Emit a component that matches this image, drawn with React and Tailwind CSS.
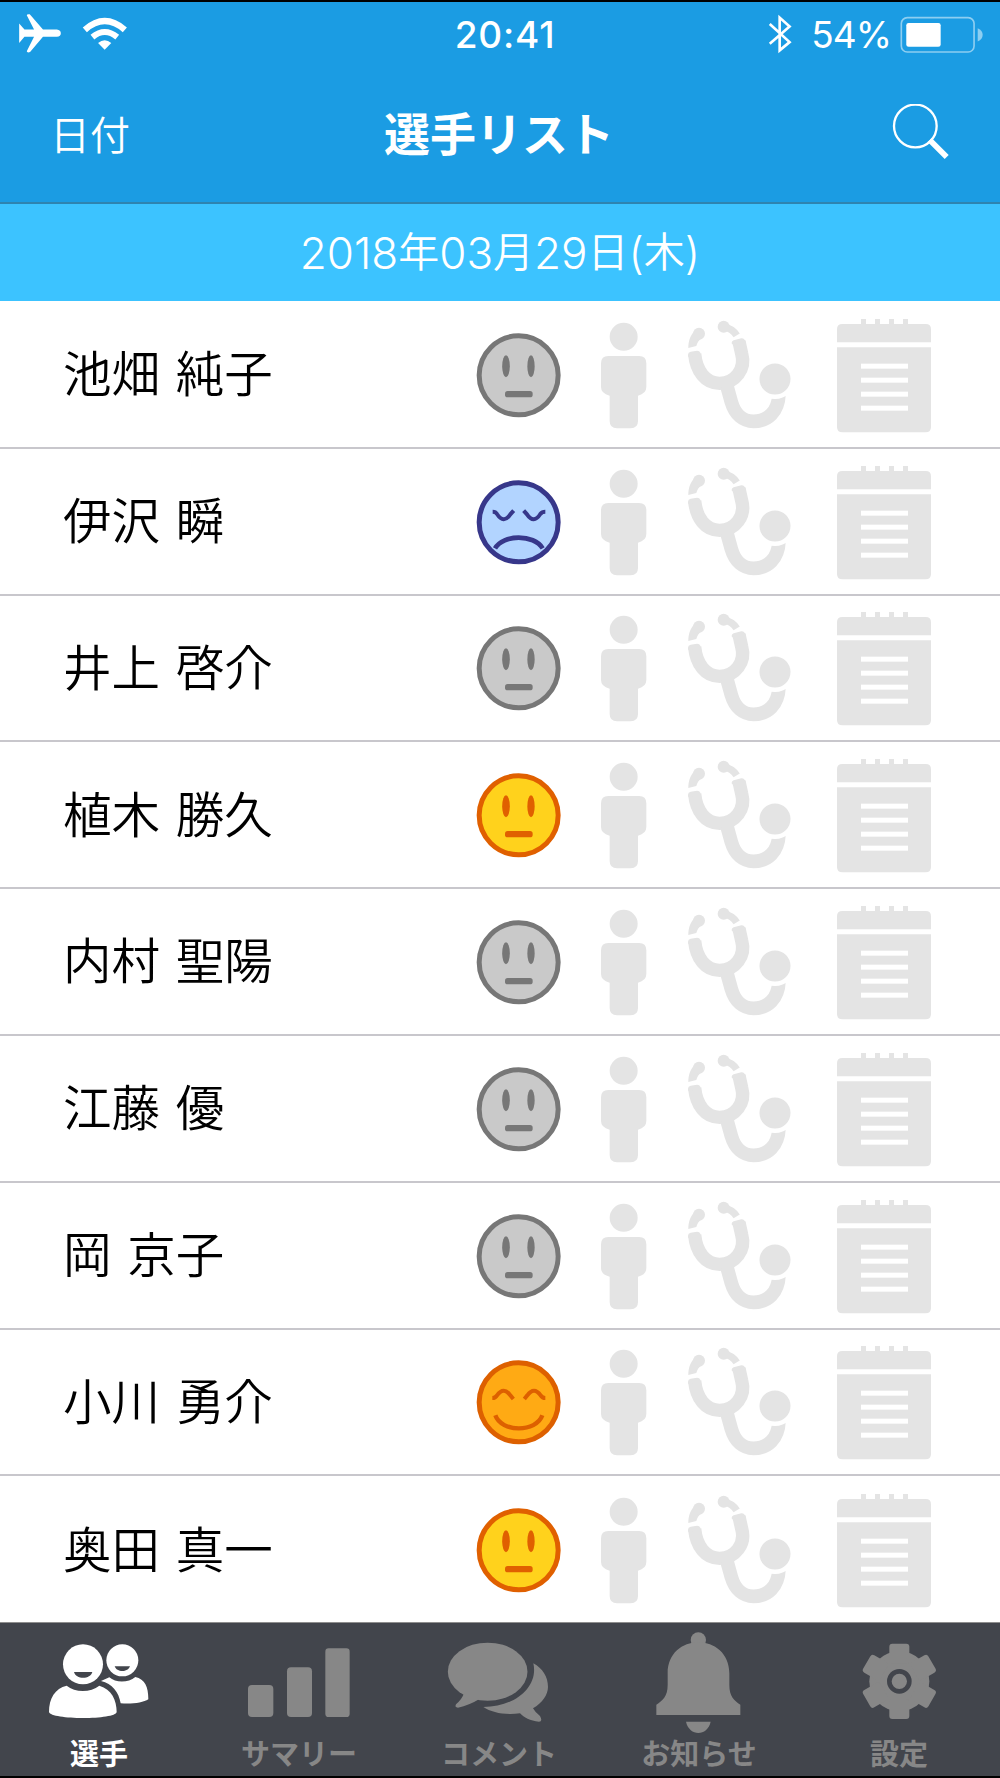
import React from 'react';

const players = [
    { name: '池畑 純子', mood: 'none' },
    { name: '伊沢 瞬', mood: 'sad' },
    { name: '井上 啓介', mood: 'none' },
    { name: '植木 勝久', mood: 'normal' },
    { name: '内村 聖陽', mood: 'none' },
    { name: '江藤 優', mood: 'none' },
    { name: '岡 京子', mood: 'none' },
    { name: '小川 勇介', mood: 'happy' },
    { name: '奥田 真一', mood: 'normal' },
];

const moodColors = {
    none: { line: '#777777', fill: '#c9c9c9' },
    normal: { line: '#e06000', fill: '#ffd21c' },
    happy: { line: '#dd6000', fill: '#ffaa14' },
    sad: { line: '#37378a', fill: '#b2d4ff' },
};

function MoodIcon({ mood }) {
    const { line, fill } = moodColors[mood];
    return (
        <svg viewBox="48 47 258 354" className="w-[86px] h-[118px]" fill="none">
            <circle cx="176" cy="225" r="118.5" fill={fill} stroke={line} strokeWidth="15" />
            {(mood === 'none' || mood === 'normal') && (
                <g fill={line}>
                    <ellipse cx="138" cy="198" rx="11.5" ry="33" />
                    <ellipse cx="213" cy="198" rx="11" ry="33" />
                    <rect x="135" y="272" width="83" height="19" rx="8" />
                </g>
            )}
            {mood === 'sad' && (
                <g stroke={line} strokeWidth="12">
                    <path d="M98 193 Q107 193 111 200 Q131 231 151 201 L161 190" />
                    <path d="M191 190 L201 201 Q221 231 241 200 Q246 193 256 193" />
                    <path d="M105 303 C130 260 222 260 248 303" strokeWidth="14" />
                </g>
            )}
            {mood === 'happy' && (
                <g stroke={line} strokeWidth="12">
                    <path d="M97 212 Q106 212 111 204 Q131 176 151 204 L160 215" />
                    <path d="M193 215 L202 204 Q222 176 242 204 Q247 212 256 212" />
                    <path d="M106 264 C124 316 229 316 247 264" strokeWidth="13" />
                </g>
            )}
        </svg>
    );
}

function PersonIcon() {
    return (
        <svg viewBox="423 47 138 354" className="w-[46px] h-[118px] ml-[39px]" fill="#e4e4e4">
            <circle cx="491" cy="109.500" r="42" />
            <path d="M445 167 H537 Q559 167 559 189 V260 Q559 280 534 286 V362 Q534 384 512 384 H471 Q449 384 449 362 V286 Q423 280 423 260 V189 Q423 167 445 167Z" />
        </svg>
    );
}

function StethoscopeIcon() {
    return (
        <svg viewBox="681 47 312 354" className="w-[104px] h-[118px] ml-10" fill="none" stroke="#e4e4e4">
            <path d="M685 143 C685 120 692 103 705 91 L727 112 C715 120 711 128 709 137Z" fill="#e4e4e4" stroke="none" />
            <circle cx="717" cy="100" r="18" fill="#e4e4e4" stroke="none" />
            <path d="M791 80 Q817 84 830 105" strokeWidth="22" />
            <circle cx="791" cy="79" r="18" fill="#e4e4e4" stroke="none" />
            <path d="M704 161 C709 212 736 249 779 249 C826 249 858 205 845 160 L837 124" strokeWidth="40" />
            <path d="M684 163 Q684 156 692 154 L711 151 Q719 151 721 157 L723 164 L684 169Z" fill="#e4e4e4" stroke="none" />
            <path d="M816 132 L815 127 Q815 122 821 120 L844 114 Q851 113 855 120 L858 130Z" fill="#e4e4e4" stroke="none" />
            <path d="M801 258 L814 305 C825 343 850 363 880 363 C923 363 955 335 957 280" strokeWidth="41" />
            <circle cx="945" cy="236" r="60" fill="#fff" stroke="none" />
            <circle cx="945" cy="236" r="46.500" fill="#e4e4e4" stroke="none" />
        </svg>
    );
}

function NoteIcon() {
    return (
        <svg viewBox="1131 47 282 354" className="w-[94px] h-[118px] ml-[46px]" fill="#e4e4e4">
            {[1203, 1245, 1287, 1329].map(x => (
                <rect key={x} x={x} y="56" width="15" height="16" />
            ))}
            <path d="M1131 126 V87 Q1131 71 1147 71 H1397 Q1413 71 1413 87 V126Z" />
            <path d="M1131 141 H1413 V380 Q1413 396 1397 396 H1147 Q1131 396 1131 380Z" />
            {[190, 232, 274, 316].map(y => (
                <rect key={y} x="1203" y={y} width="141" height="15" fill="#fff" />
            ))}
        </svg>
    );
}

function StatusBar() {
    return (
        <div className="grid grid-cols-[1fr_auto_1fr] items-center h-[62px] text-[37px] leading-none">
            <div className="flex items-center pl-[19px]">
                <svg viewBox="57 36 126 124" className="w-[42px] h-[41px]" fill="#fff">
                    <path d="M57 68 L73 86 H102 L80 43 Q80 39 89 40 L129 86 H171 Q183 88 183 97 Q183 107 171 108 H129 L90 154 Q81 157 80 152 L102 108 H73 L57 127Z" />
                </svg>
                <svg viewBox="246 36 138 124" className="w-[46px] h-[41px] ml-[21px]" fill="none" stroke="#fff">
                    <path d="M254 87 Q314 34 375 87" strokeWidth="19" />
                    <path d="M277 109 Q314 78 352 109" strokeWidth="18" />
                    <path d="M294 127 Q314 110 334 127 L314 147Z" fill="#fff" stroke="none" />
                </svg>
            </div>
            <div className="font-medium tracking-[0.8px] pt-[2px] pl-[10px]">20:41</div>
            <div className="flex items-center justify-end pr-[17px]">
                <svg viewBox="813 36 72 124" className="w-6 h-[41px]" fill="none" stroke="#fff" strokeWidth="8">
                    <path d="M818 69 L878 124 L848 149 V50 L878 77 L818 129" />
                </svg>
                <div className="pt-[2px] ml-[19px] tracking-[-1px]">54%</div>
                <svg viewBox="1197 36 252 124" className="w-[84px] h-[41px] ml-[8px]" fill="none">
                    <rect x="1203" y="50" width="220" height="104" rx="18" stroke="#fff" strokeOpacity="0.5" strokeWidth="5" />
                    <rect x="1218" y="66" width="104" height="72" rx="7" fill="#fff" />
                    <path d="M1434 82 Q1449 88 1449 102 Q1449 116 1434 122Z" fill="#fff" fillOpacity="0.5" />
                </svg>
            </div>
        </div>
    );
}

function NavBar() {
    return (
        <div className="grid grid-cols-[1fr_auto_1fr] items-center h-[138px]">
            <div className="pl-[50px] pt-[6px] text-[40px] font-[350] leading-none">日付</div>
            <h1 className="text-[46px] font-bold leading-none pt-[2px] pr-[2px]">選手リスト</h1>
            <div className="flex justify-end pr-[51px] pb-[3px]">
                <svg viewBox="1176 310 171 168" className="w-[57px] h-14" fill="none" stroke="#fff">
                    <circle cx="1246" cy="376" r="64" strokeWidth="7" />
                    <path d="M1289 418 L1340 469" strokeWidth="17" />
                </svg>
            </div>
        </div>
    );
}

function PlayerRow({ player }) {
    return (
        <li className="flex items-center h-[146.8px] pl-[63px] pt-px border-b-2 border-[#c8c7cc] last:border-b-0">
            <span className="w-[413px] pt-px text-[48.500px] leading-none [word-spacing:2px] font-[350]">{player.name}</span>
            <MoodIcon mood={player.mood} />
            <PersonIcon />
            <StethoscopeIcon />
            <NoteIcon />
        </li>
    );
}

const tabs = [
    {
        label: '選手',
        viewBox: '0 60 600 315',
        icon: (
            <>
                <circle cx="367" cy="151" r="48" />
                <path d="M303 213 L328 202 C347 219 385 219 406 201 C435 208 445 230 445 268 C430 278 395 283 362 280 C356 245 337 222 303 213Z" />
                <circle cx="249" cy="163" r="60" />
                <path d="M147 306 C147 265 165 235 200 227 C225 248 272 248 298 227 C335 238 350 270 350 306 C348 318 300 324 249 324 C200 324 150 318 147 306Z" />
                <path d="M222 186 H277 C272 209 227 209 222 186Z M344 169 H390 C384 188 350 188 344 169Z" fill="#42454c" />
            </>
        ),
    },
    {
        label: 'サマリー',
        viewBox: '600 60 600 315',
        icon: (
            <>
                <rect x="744" y="225" width="76" height="96" rx="12" />
                <rect x="861" y="172" width="75" height="149" rx="12" />
                <rect x="976" y="115" width="73" height="206" rx="10" />
            </>
        ),
    },
    {
        label: 'コメント',
        viewBox: '1200 60 600 315',
        icon: (
            <>
                <ellipse cx="1463" cy="185" rx="119.500" ry="87" />
                <path d="M1392 250 Q1386 268 1368 283 Q1363 293 1374 293 Q1408 286 1437 268Z" />
                <path d="M1600 160 C1628 176 1644 200 1644 230 C1644 255 1627 278 1599 295 Q1606 308 1620 318 Q1629 335 1617 335 C1590 333 1572 322 1560 310 C1515 316 1475 308 1450 291 C1545 291 1616 230 1600 160Z" />
            </>
        ),
    },
    {
        label: 'お知らせ',
        viewBox: '300 60 600 315',
        icon: (
            <>
                <circle cx="595" cy="90" r="23" />
                <path d="M503 190 C503 130 547 97 595 97 C643 97 688 130 688 190 V225 C688 260 703 272 721 284 V315 H469 V284 C487 272 503 260 503 225Z" />
                <path d="M558 335 H632 C622 380 568 380 558 335Z" />
            </>
        ),
    },
    {
        label: '設定',
        viewBox: '900 60 600 315',
        icon: (
            <>
                <circle cx="1198" cy="214" r="90" />
                {[0, 60, 120, 180, 240, 300].map(a => (
                    <rect key={a} x="1168" y="101" width="60" height="60" rx="9" transform={`rotate(${a} 1198 214)`} />
                ))}
                <circle cx="1198" cy="214" r="30" fill="none" stroke="#42454c" strokeWidth="14" />
            </>
        ),
    },
];

function TabBar() {
    return (
        <nav className="relative grid grid-cols-5 h-[156px] bg-[#42454c] border-t border-t-[#8e8e8e] border-b-2 border-b-black">
            {tabs.map((tab, i) => (
                <div key={tab.label} className={i === 0 ? 'text-white' : 'text-[#878787]'}>
                    <svg viewBox={tab.viewBox} className="w-[200px] h-[105px] mt-[7px]" fill="currentColor">
                        {tab.icon}
                    </svg>
                    <div className="text-center text-[29px] leading-none font-bold mt-[5px] pr-[2px]">{tab.label}</div>
                </div>
            ))}
        </nav>
    );
}

export default function App() {
    return (
        <div className="w-[1000px] h-[1778px] overflow-hidden flex flex-col bg-white text-black font-['Inter','Noto_Sans_CJK_JP',sans-serif]">
            <header className="bg-[#1b9ce3] text-white border-t-2 border-t-black border-b-2 border-b-[#2e84b0] h-[204px] shrink-0">
                <StatusBar />
                <NavBar />
            </header>
            <div className="flex items-center justify-center h-[97px] shrink-0 bg-[#3cc3ff] text-white text-[41px] font-[350] leading-none">
                <span className="text-[44px]">2018</span>年<span className="text-[44px]">03</span>月
                <span className="text-[44px]">29</span>日<span className="text-[44px]">(</span>木<span className="text-[44px]">)</span>
            </div>
            <ul className="h-[1321px] shrink-0 pt-px">
                {players.map(p => (
                    <PlayerRow key={p.name} player={p} />
                ))}
            </ul>
            <TabBar />
        </div>
    );
}
